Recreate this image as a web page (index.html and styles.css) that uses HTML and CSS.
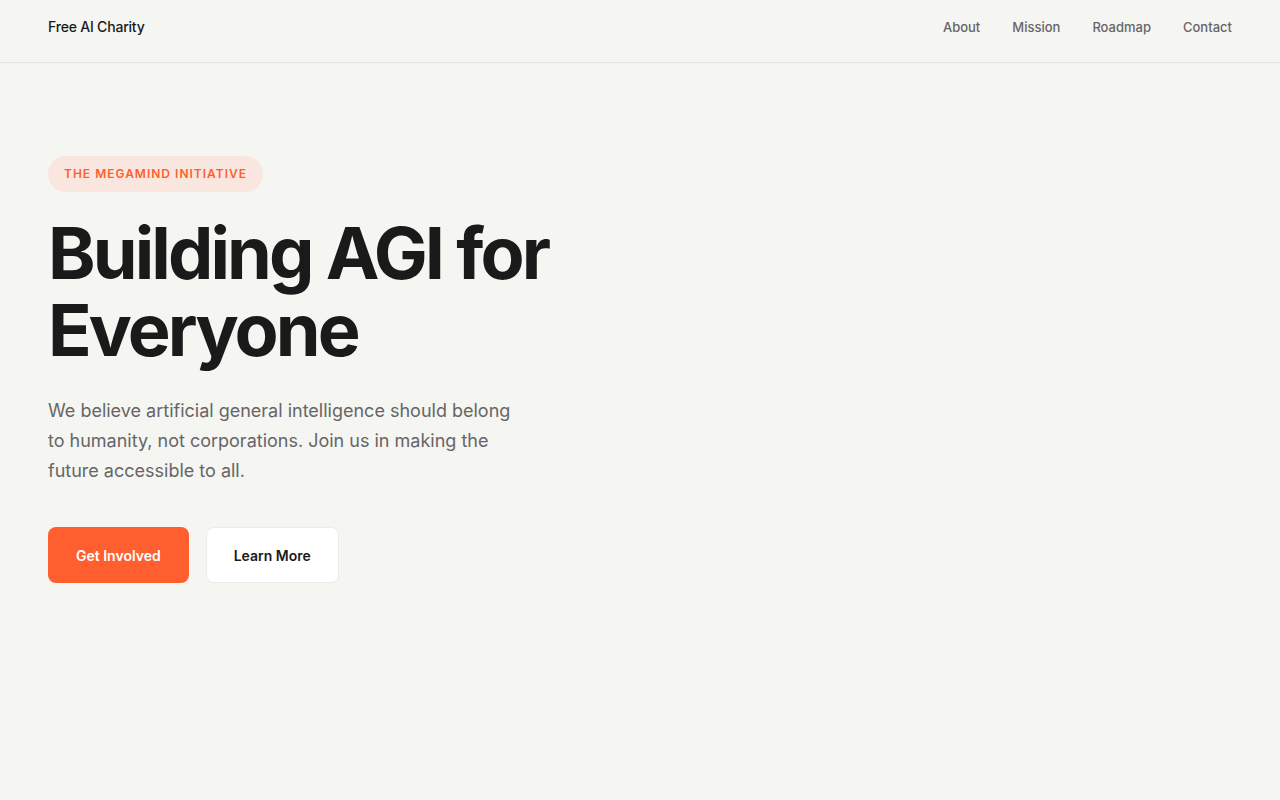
FILE: index.html
```html
<!DOCTYPE html>
<html lang="en">
<head>
<meta charset="utf-8">
<title>Free AI Charity</title>
<link rel="stylesheet" href="styles.css">
</head>
<body>
<header class="site-header">
  <div class="logo">Free AI Charity</div>
  <nav class="nav">
    <a href="#">About</a>
    <a href="#">Mission</a>
    <a href="#">Roadmap</a>
    <a href="#">Contact</a>
  </nav>
</header>
<main class="hero">
  <span class="badge">THE MEGAMIND INITIATIVE</span>
  <h1 class="title">Building AGI for<br>Everyone</h1>
  <p class="lead">We believe artificial general intelligence should belong to humanity, not corporations. Join us in making the future accessible to all.</p>
  <div class="actions">
    <a class="btn btn-primary" href="#">Get Involved</a>
    <a class="btn btn-secondary" href="#">Learn More</a>
  </div>
</main>
</body>
</html>
```
FILE: styles.css
```css
* { box-sizing: border-box; }
html, body { margin: 0; padding: 0; }
body {
  background: #f5f5f2;
  font-family: "Inter", "Liberation Sans", sans-serif;
  color: #1a1a1a;
  min-height: 800px;
}
.site-header {
  height: 63px;
  display: flex;
  align-items: flex-start;
  justify-content: space-between;
  padding: 18px 48px 0;
  border-bottom: 1px solid #e4e4e1;
}
.logo {
  font-size: 14px;
  line-height: 18px;
  font-weight: 500;
  letter-spacing: -0.2px;
  color: #1a1a1a;
}
.nav {
  display: flex;
  gap: 32px;
}
.nav a {
  font-size: 13px;
  line-height: 18px;
  font-weight: 500;
  color: #666;
  text-decoration: none;
}
.hero {
  padding: 93px 48px 0;
  display: flex;
  flex-direction: column;
  align-items: flex-start;
}
.badge {
  display: inline-block;
  background: #f8e6df;
  color: #ff5f2e;
  font-size: 12px;
  font-weight: 600;
  letter-spacing: 1px;
  padding: 11px 16px;
  border-radius: 18px;
  line-height: 14px;
}
.title {
  margin: 22px 0 0;
  font-size: 72px;
  line-height: 77px;
  font-weight: 700;
  letter-spacing: -0.04em;
  color: #1a1a1a;
}
.lead {
  margin: 28px 0 0;
  max-width: 480px;
  font-size: 18px;
  line-height: 30px;
  color: #666;
}
.actions {
  display: flex;
  gap: 17px;
  margin-top: 41px;
}
.btn {
  display: inline-flex;
  align-items: center;
  justify-content: center;
  height: 56px;
  padding: 0 28px;
  border-radius: 8px;
  font-size: 14px;
  font-weight: 600;
  text-decoration: none;
}
.btn-primary {
  background: #ff5f2e;
  color: #fff;
}
.btn-secondary {
  background: #fff;
  color: #1a1a1a;
  border: 1px solid #ececea;
  padding: 0 27px;
}
```
